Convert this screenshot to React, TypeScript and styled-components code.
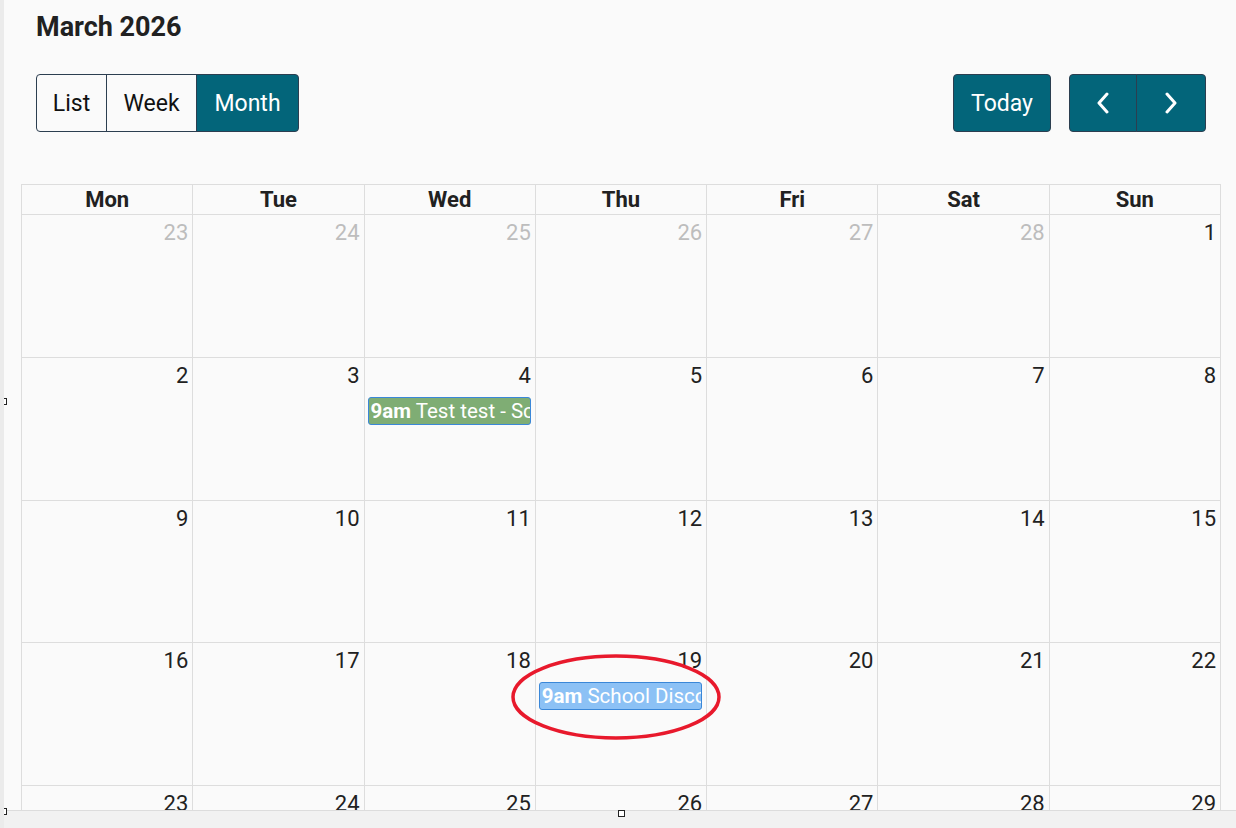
import React from "react";
import styled, { createGlobalStyle } from "styled-components";

const Global = createGlobalStyle`
  html, body { margin: 0; padding: 0; background: #fafafa; }
  body { font-family: Roboto, "Liberation Sans", Arial, sans-serif; color: #212121; }
  * { box-sizing: border-box; }
`;

const Page = styled.div`
  position: relative;
  width: 1236px;
  height: 828px;
  overflow: hidden;
  background: #fafafa;
  border-left: 4px solid #ebebeb;
`;

const Content = styled.div`
  display: flex;
  flex-direction: column;
  padding: 11px 0 0 32px;
`;

const Title = styled.h2`
  margin: 0;
  font-size: 27px;
  font-weight: 700;
  line-height: 33px;
  color: #212121;
`;

const Toolbar = styled.div`
  display: flex;
  justify-content: space-between;
  align-items: center;
  margin-top: 30px;
  width: 1170px;
`;

const Group = styled.div`
  display: flex;
`;

const Btn = styled.button<{ $active?: boolean; $w: number }>`
  height: 58px;
  width: ${(p) => p.$w}px;
  display: flex;
  align-items: center;
  justify-content: center;
  font-family: Roboto, "Liberation Sans", Arial, sans-serif;
  font-size: 23px;
  color: ${(p) => (p.$active ? "#ffffff" : "#111")};
  background: ${(p) => (p.$active ? "#03657a" : "#fafafa")};
  border: 1px solid #2c3e50;
  border-radius: 0;
  padding: 0;
  margin-left: -1px;
  &:first-child { border-radius: 4px 0 0 4px; margin-left: 0; }
  &:last-child { border-radius: 0 4px 4px 0; }
  &:only-child { border-radius: 4px; }
`;

const RightGroup = styled.div`
  display: flex;
  gap: 18px;
`;

const Calendar = styled.div`
  margin-top: 52px;
  margin-left: -15px;
  width: 1200px;
  display: grid;
  grid-template-columns: repeat(7, 1fr);
  grid-template-rows: 30px repeat(5, 142.75px);
  border-top: 1px solid #ddd;
  border-left: 1px solid #ddd;
`;

const HeadCell = styled.div`
  border-right: 1px solid #ddd;
  border-bottom: 1px solid #ddd;
  font-weight: 700;
  font-size: 22px;
  line-height: 29px;
  text-align: center;
  color: #212121;
`;

const DayCell = styled.div`
  border-right: 1px solid #ddd;
  border-bottom: 1px solid #ddd;
  display: flex;
  flex-direction: column;
  min-width: 0;
`;

const DayNum = styled.div<{ $other?: boolean }>`
  text-align: right;
  padding: 3px 4px 0 0;
  font-size: 22px;
  line-height: 29px;
  color: ${(p) => (p.$other ? "#bdbdbd" : "#212121")};
`;

const Event = styled.div<{ $bg: string }>`
  margin: 7px 4px 0 3px;
  height: 28px;
  background: ${(p) => p.$bg};
  border: 1px solid #3a87d8;
  border-radius: 3px;
  color: #fff;
  font-size: 20.5px;
  line-height: 26px;
  white-space: nowrap;
  overflow: hidden;
  padding-left: 2px;
  b { font-weight: 700; }
`;

const BottomBar = styled.div`
  position: absolute;
  left: -4px;
  right: 0;
  bottom: 0;
  height: 18px;
  background: #f1f1f1;
  border-top: 1px solid #dcdcdc;
`;

const Handle = styled.div<{ $x: number; $y: number }>`
  position: absolute;
  left: ${(p) => p.$x}px;
  top: ${(p) => p.$y}px;
  width: 7px;
  height: 7px;
  border: 1px solid #222;
  background: #fff;
`;

const Annotation = styled.svg`
  position: absolute;
  left: 501px;
  top: 649px;
  pointer-events: none;
`;

const days = ["Mon", "Tue", "Wed", "Thu", "Fri", "Sat", "Sun"];

type Ev = { time: string; title: string; bg: string };
const events: Record<string, Ev> = {
  "4": { time: "9am", title: "Test test - School", bg: "#7fad74" },
  "19": { time: "9am", title: "School Disco", bg: "#8cc1f5" },
};

const weeks: { n: number; other?: boolean }[][] = [
  [23, 24, 25, 26, 27, 28].map((n) => ({ n, other: true })).concat([{ n: 1 }]),
  [2, 3, 4, 5, 6, 7, 8].map((n) => ({ n })),
  [9, 10, 11, 12, 13, 14, 15].map((n) => ({ n })),
  [16, 17, 18, 19, 20, 21, 22].map((n) => ({ n })),
  [23, 24, 25, 26, 27, 28, 29].map((n) => ({ n })),
];

const Chevron = ({ dir }: { dir: "l" | "r" }) => (
  <svg width="14" height="22" viewBox="0 0 14 22" fill="none">
    <path
      d={dir === "l" ? "M11 2 L3 11 L11 20" : "M3 2 L11 11 L3 20"}
      stroke="#fff"
      strokeWidth="3"
      strokeLinecap="round"
      strokeLinejoin="round"
    />
  </svg>
);

export default function App() {
  return (
    <>
      <Global />
      <Page>
        <Content>
          <Title>March 2026</Title>
          <Toolbar>
            <Group>
              <Btn $w={71}>List</Btn>
              <Btn $w={91}>Week</Btn>
              <Btn $w={103} $active>
                Month
              </Btn>
            </Group>
            <RightGroup>
              <Group>
                <Btn $w={98} $active>
                  Today
                </Btn>
              </Group>
              <Group>
                <Btn $w={68} $active aria-label="prev">
                  <Chevron dir="l" />
                </Btn>
                <Btn $w={70} $active aria-label="next">
                  <Chevron dir="r" />
                </Btn>
              </Group>
            </RightGroup>
          </Toolbar>
          <Calendar>
            {days.map((d) => (
              <HeadCell key={d}>{d}</HeadCell>
            ))}
            {weeks.map((w, wi) =>
              w.map((d, di) => {
                const ev = !d.other ? events[String(d.n)] : undefined;
                return (
                  <DayCell key={`${wi}-${di}`}>
                    <DayNum $other={d.other}>{d.n}</DayNum>
                    {ev && wi < 4 && (
                      <Event $bg={ev.bg}>
                        <b>{ev.time}</b> {ev.title}
                      </Event>
                    )}
                  </DayCell>
                );
              })
            )}
          </Calendar>
        </Content>
        <Annotation width="222" height="96" viewBox="0 0 222 96">
          <ellipse cx="111" cy="48" rx="103" ry="41" fill="none" stroke="#e8192c" strokeWidth="3.5" />
        </Annotation>
        <BottomBar />
        <Handle $x={-4} $y={398} />
        <Handle $x={-4} $y={808} />
        <Handle $x={614} $y={810} />
      </Page>
    </>
  );
}
